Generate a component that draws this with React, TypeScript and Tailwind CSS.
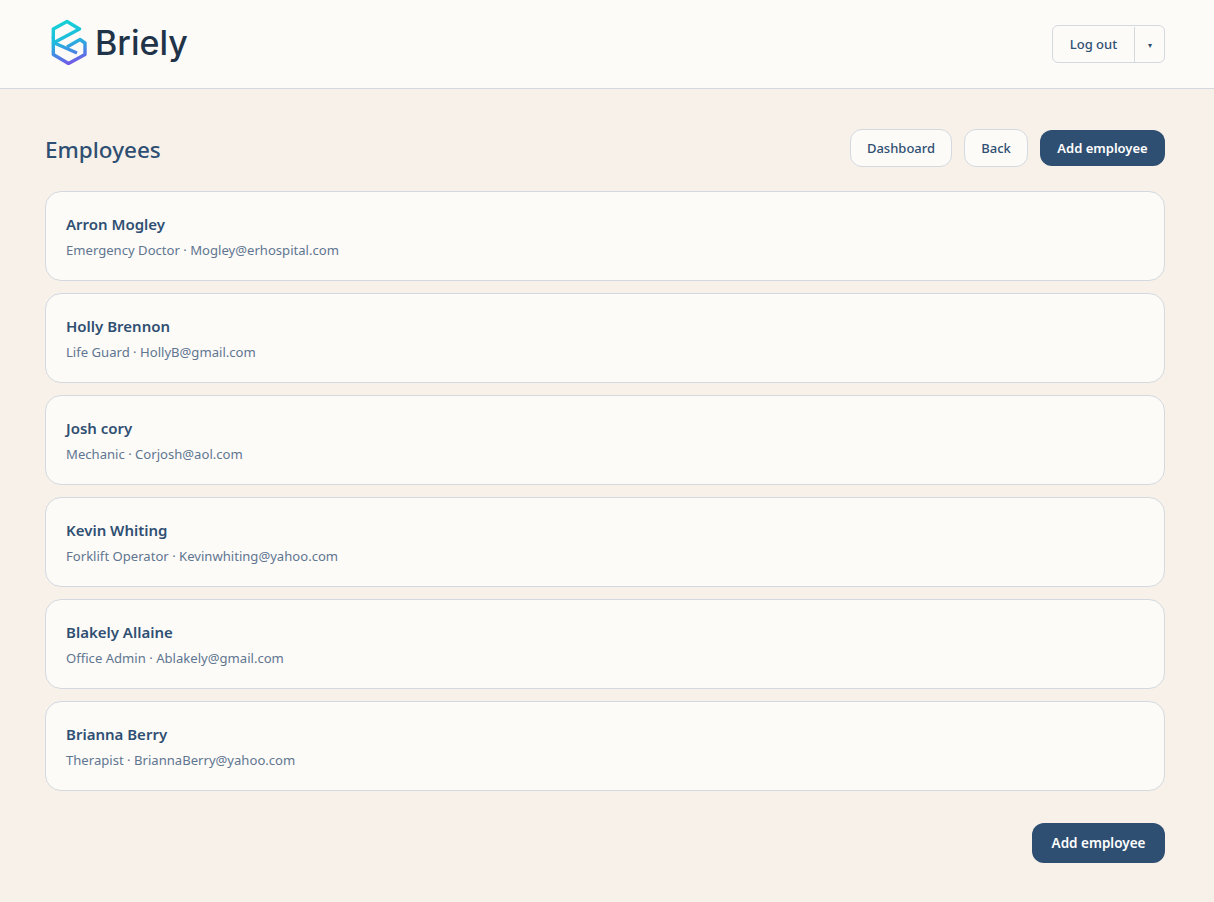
const employees = [
  { name: "Arron Mogley", role: "Emergency Doctor", email: "Mogley@erhospital.com" },
  { name: "Holly Brennon", role: "Life Guard", email: "HollyB@gmail.com" },
  { name: "Josh cory", role: "Mechanic", email: "Corjosh@aol.com" },
  { name: "Kevin Whiting", role: "Forklift Operator", email: "Kevinwhiting@yahoo.com" },
  { name: "Blakely Allaine", role: "Office Admin", email: "Ablakely@gmail.com" },
  { name: "Brianna Berry", role: "Therapist", email: "BriannaBerry@yahoo.com" },
];

const Logo = () => (
  <svg width="38" height="46" viewBox="0 0 38 46" fill="none" className="mb-[5px]">
    <defs>
      <linearGradient id="logoGrad" gradientUnits="userSpaceOnUse" x1="12" y1="2" x2="22" y2="46">
        <stop offset="0" stopColor="#14d2d6" />
        <stop offset="0.42" stopColor="#1fbcdc" />
        <stop offset="0.68" stopColor="#3f8fe4" />
        <stop offset="1" stopColor="#7a52e6" />
      </linearGradient>
    </defs>
    <path
      d="M3.3 19V10L17 2.5L29.5 10L3.3 24V35.5L18.5 44.5L35 35.5V24L30 20.5L17 28"
      stroke="url(#logoGrad)"
      strokeWidth="3.4"
      strokeLinejoin="round"
    />
    <path d="M3.3 18V23.5L27 34" stroke="url(#logoGrad)" strokeWidth="3.4" strokeLinejoin="round" />
  </svg>
);

export default function App() {
  return (
    <div className="min-h-[902px] bg-[#f8f1ea] font-['Noto_Sans',sans-serif] text-[#2f4f72]">
      <header className="flex h-[89px] items-center justify-between border-b border-[#d3d9df] bg-[#fdfbf8] pl-[50px] pr-[49px]">
        <div className="flex items-center gap-[7px]">
          <Logo />
          <span className="pb-0.5 font-['Inter',sans-serif] text-[34px] leading-none font-medium text-[#1f3349]">Briely</span>
        </div>
        <div className="flex h-[38px] w-[113px] items-center rounded-md border border-[#d3d9df] pt-px text-[13px] font-medium">
          <span className="flex h-full w-[82px] items-center justify-center border-r border-[#d3d9df]">Log out</span>
          <span className="flex-1 text-center text-[8px]">▾</span>
        </div>
      </header>

      <main className="ml-[45px] w-[1120px]">
        <div className="flex items-center justify-between pt-10 pb-6">
          <h1 className="pt-1 text-[22.5px] font-medium">Employees</h1>
          <div className="flex items-center gap-3 text-[13px] font-semibold">
            <button className="h-[38px] w-[102px] rounded-xl border border-[#d3d9df] bg-[#fdfbf8] pt-0.5 font-medium">Dashboard</button>
            <button className="h-[38px] w-[64px] rounded-xl border border-[#d3d9df] bg-[#fdfbf8] pt-0.5 font-medium">Back</button>
            <button className="h-[36px] w-[125px] rounded-xl bg-[#2f4f72] pt-0.5 text-white">Add employee</button>
          </div>
        </div>

        <div className="flex flex-col gap-3">
          {employees.map((e) => (
            <div key={e.email} className="h-[90px] rounded-2xl border border-[#d3d9df] bg-[#fdfbf8] px-5 pt-[21px]">
              <div className="text-[15px] leading-[22px] font-semibold">{e.name}</div>
              <div className="mt-[6px] text-[13.1px] leading-[18px] text-[#5f7690]">
                {e.role} · {e.email}
              </div>
            </div>
          ))}
        </div>

        <div className="flex justify-end pt-8">
          <button className="h-10 w-[133px] rounded-xl bg-[#2f4f72] text-[13.5px] font-semibold text-white">Add employee</button>
        </div>
      </main>
    </div>
  );
}
